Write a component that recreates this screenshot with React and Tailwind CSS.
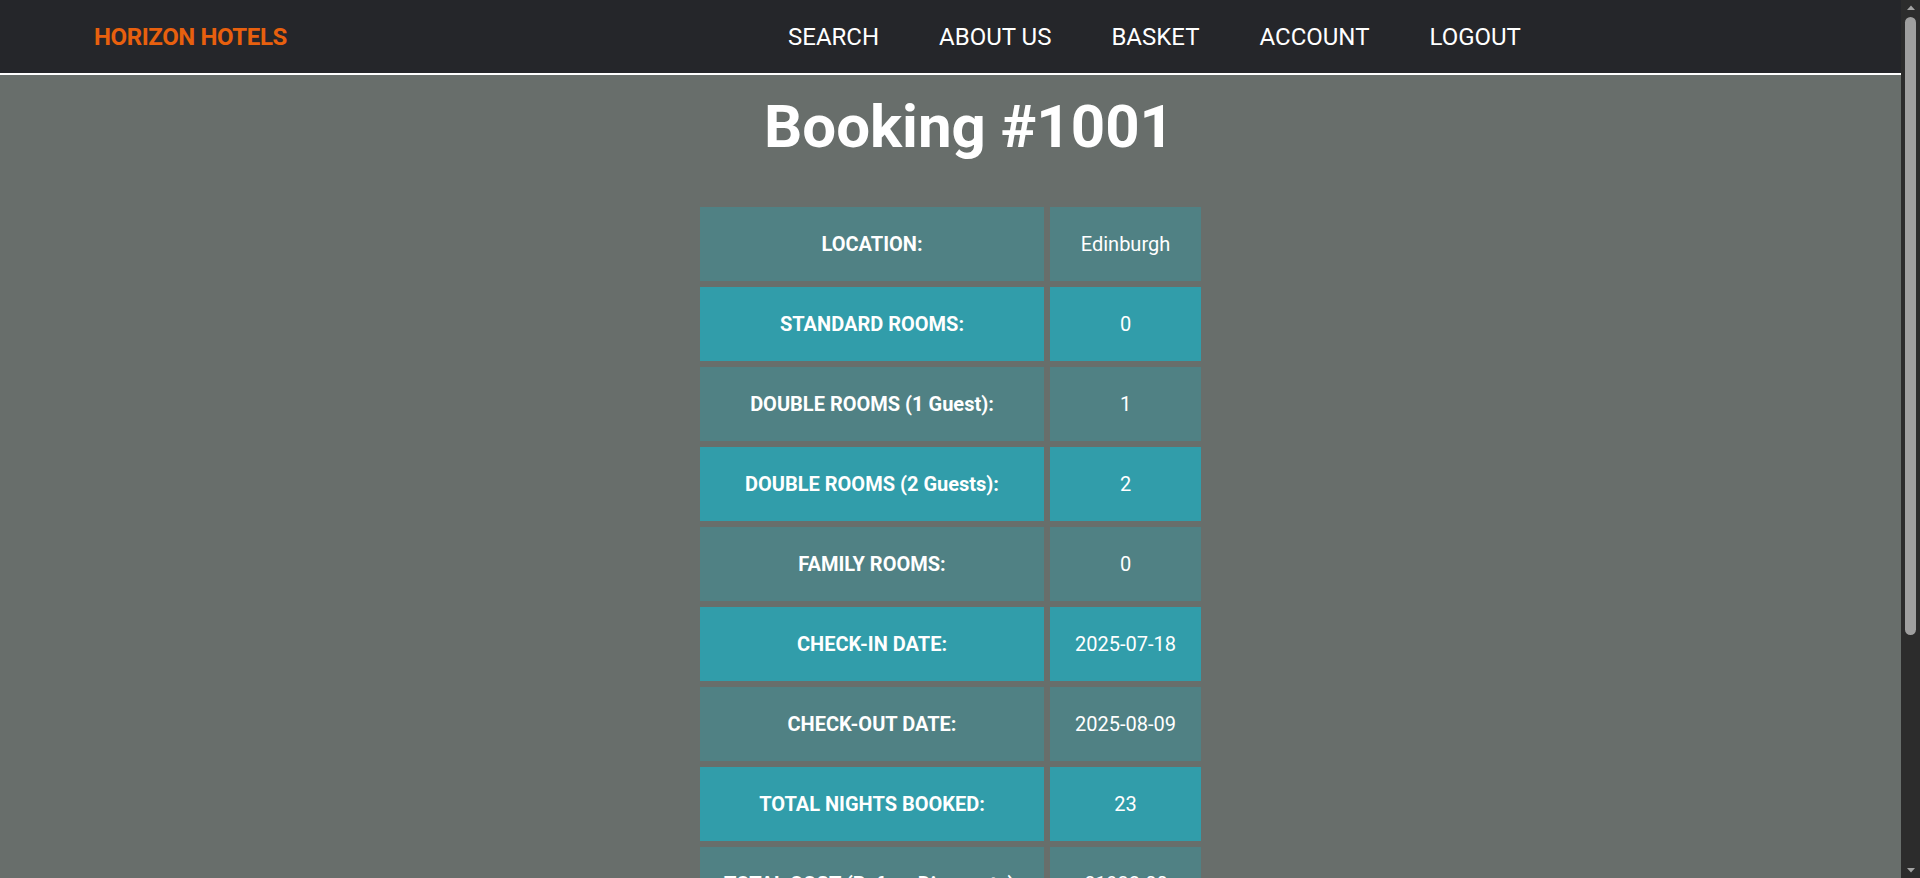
import React from 'react'

// ── booking data ───────────────────────────────────────────
const rows = [
  ['LOCATION:', 'Edinburgh'],
  ['STANDARD ROOMS:', '0'],
  ['DOUBLE ROOMS (1 Guest):', '1'],
  ['DOUBLE ROOMS (2 Guests):', '2'],
  ['FAMILY ROOMS:', '0'],
  ['CHECK-IN DATE:', '2025-07-18'],
  ['CHECK-OUT DATE:', '2025-08-09'],
  ['TOTAL NIGHTS BOOKED:', '23'],
  ['TOTAL COST (Before Discounts):', '£1932.00'],
  ['DISCOUNT APPLIED:', '£0.00'],
  ['TOTAL COST (After Discounts):', '£1932.00'],
  ['BOOKED ON:', '2025-06-02'],
]

const links = ['SEARCH', 'ABOUT US', 'BASKET', 'ACCOUNT', 'LOGOUT']

// ── Navbar ─────────────────────────────────────────────────
function Navbar() {
  return (
    <nav className="h-[75px] bg-[#25262a] border-b-2 border-white flex items-center">
      <div className="w-[788px] pl-[94px]">
        <a href="#" className="text-2xl font-bold tracking-[-0.4px] text-[#e8600e]">HORIZON HOTELS</a>
      </div>
      <ul className="flex items-center gap-[60px]">
        {links.map((l) => (
          <li key={l}>
            <a href="#" className="text-2xl text-white">{l}</a>
          </li>
        ))}
      </ul>
    </nav>
  )
}

// ── BookingTable ───────────────────────────────────────────
function BookingTable() {
  return (
    <div className="mx-auto mt-[45px] w-[501px] grid grid-cols-[344px_151px] gap-[6px]">
      {rows.map(([label, value], i) => {
        const bg = i % 2 === 0 ? 'bg-[#508184]' : 'bg-[#319daa]'
        return (
          <React.Fragment key={label}>
            <div className={`${bg} h-[74px] flex items-center justify-center text-xl font-bold text-white`}>
              {label}
            </div>
            <div className={`${bg} h-[74px] flex items-center justify-center text-xl text-white`}>
              {value}
            </div>
          </React.Fragment>
        )
      })}
    </div>
  )
}

// ── Scrollbar (dark, as the browser draws it) ──────────────
function Scrollbar() {
  return (
    <div className="w-[19px] shrink-0 bg-[#2c2c2c] flex flex-col items-center">
      <svg width="10" height="17" viewBox="0 0 10 17" className="shrink-0">
        <path d="M1 10 L5 5.5 L9 10 Z" fill="#a3a3a3" />
      </svg>
      <div className="w-[11px] h-[618px] rounded-full bg-[#9f9f9f]" />
      <div className="flex-1" />
      <svg width="10" height="17" viewBox="0 0 10 17" className="shrink-0">
        <path d="M1 7 L5 11.5 L9 7 Z" fill="#a3a3a3" />
      </svg>
    </div>
  )
}

// ── App ────────────────────────────────────────────────────
export default function App() {
  return (
    <div className="h-screen flex bg-[#686e6b] font-['Roboto',sans-serif]">
      <div className="flex-1 min-w-0 overflow-y-auto [scrollbar-width:none]">
        <Navbar />
        <main className="pb-[45px]">
          <h1 className="mt-[17px] pl-[37px] text-center text-[60px] leading-[70px] font-bold text-white">
            Booking #1001
          </h1>
          <BookingTable />
        </main>
      </div>
      <Scrollbar />
    </div>
  )
}
